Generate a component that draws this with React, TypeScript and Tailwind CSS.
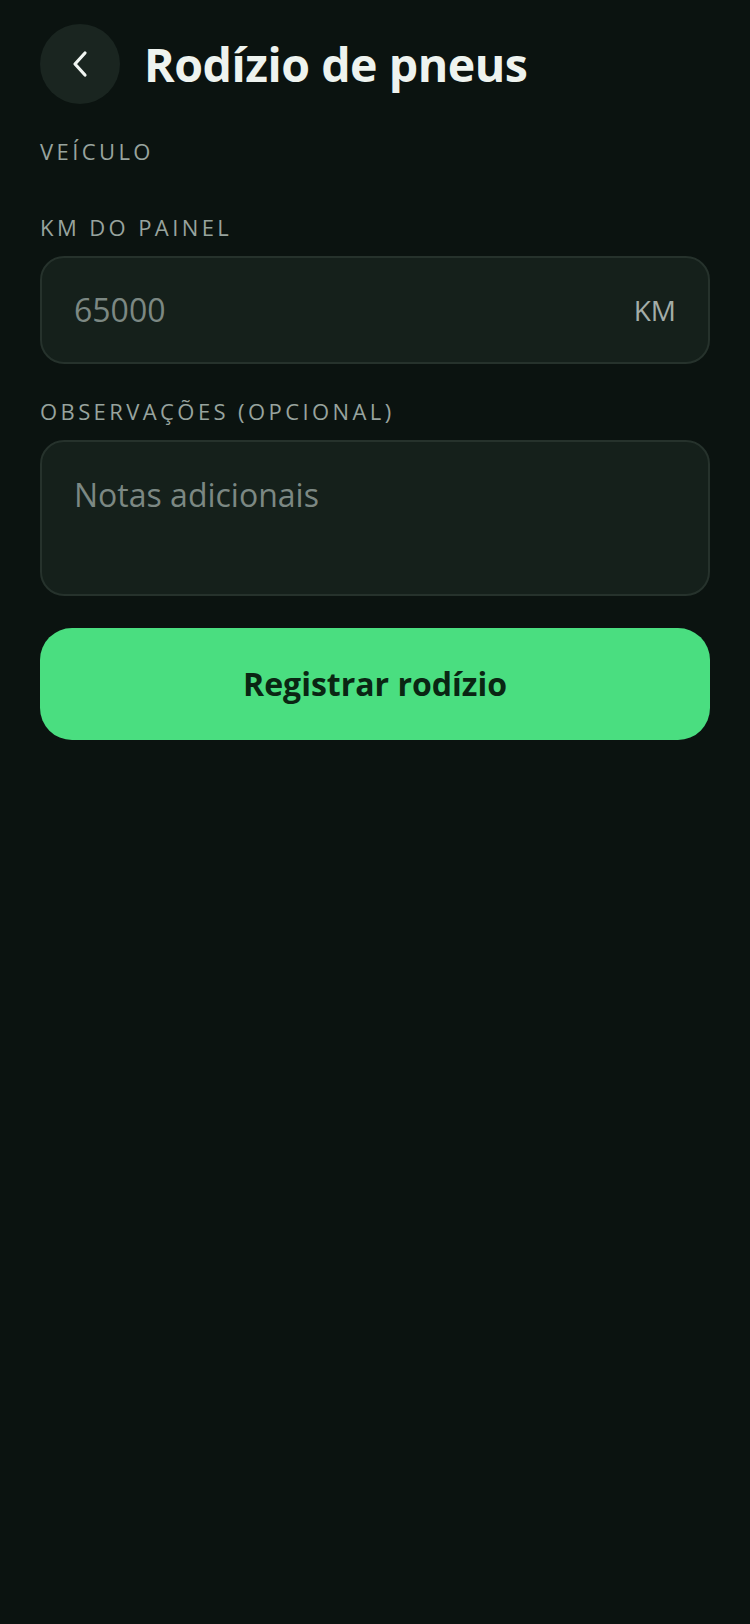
export default function App() {
  return (
    <div
      className="min-h-screen w-full bg-[#0b1310] px-10 pt-6"
      style={{ fontFamily: '"Open Sans", "Noto Sans", sans-serif' }}
    >
      {/* Header */}
      <div className="flex items-center gap-[24px]">
        <button className="flex h-20 w-20 items-center justify-center rounded-full bg-[#1a2520]">
          <svg width="20" height="28" viewBox="0 0 20 28" fill="none">
            <path
              d="M15 3 L5 14 L15 25"
              stroke="#f1f5f2"
              strokeWidth="3.2"
              strokeLinecap="round"
              strokeLinejoin="round"
            />
          </svg>
        </button>
        <h1 className="text-[46.5px] leading-none font-bold tracking-[-0.01em] text-[#eef3ef]">
          Rodízio de pneus
        </h1>
      </div>

      {/* Veículo */}
      <div className="mt-8 text-[22px] leading-[30px] tracking-[0.155em] text-[#98a39e]">VEÍCULO</div>

      {/* Km */}
      <div className="mt-[46px] text-[22px] leading-[30px] tracking-[0.155em] text-[#98a39e]">KM DO PAINEL</div>
      <div className="mt-[14px] flex h-[108px] items-center justify-between rounded-[24px] border-2 border-[#26322c] bg-[#15201b] pr-[32px] pl-[32px]">
        <span className="text-[32px] text-[#7c8883]">65000</span>
        <span className="text-[28px] text-[#a3ada8]">KM</span>
      </div>

      {/* Observações */}
      <div className="mt-8 text-[22px] leading-[30px] tracking-[0.155em] text-[#98a39e]">
        OBSERVAÇÕES (OPCIONAL)
      </div>
      <div className="mt-[14px] h-[156px] rounded-[24px] border-2 border-[#26322c] bg-[#15201b] px-[32px] pt-[33px]">
        <span className="text-[32px] leading-[40px] text-[#7c8883]">Notas adicionais</span>
      </div>

      <button className="mt-8 flex h-[112px] w-full items-center justify-center rounded-[32px] bg-[#4ade80] text-[32px] font-bold text-[#0a2613]">
        Registrar rodízio
      </button>
    </div>
  );
}
